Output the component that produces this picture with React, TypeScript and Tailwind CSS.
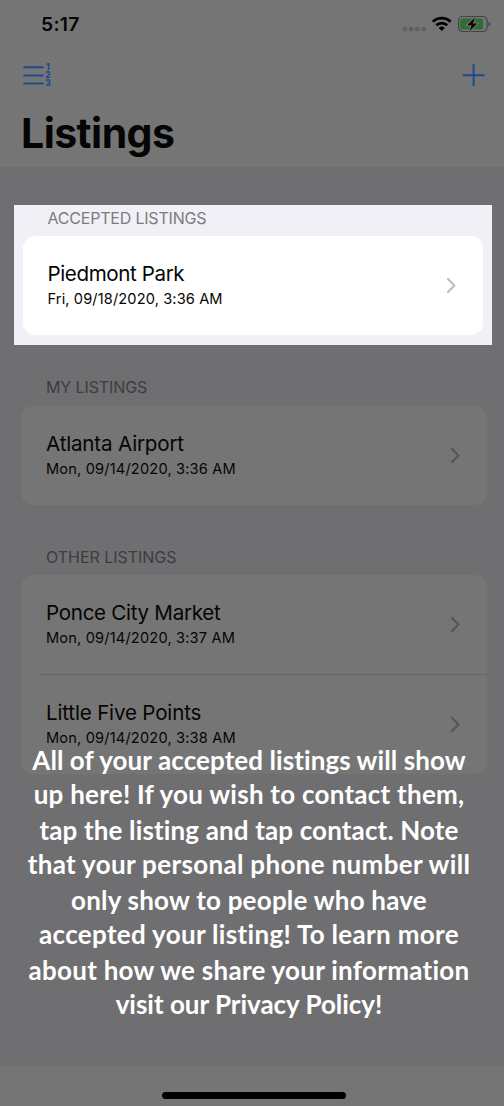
import React from "react";

function Chevron({ className }: { className: string }) {
  return (
    <svg width="11" height="17" viewBox="0 0 11 17" fill="none" className={className}>
      <path d="M2 2l6.4 6.5L2 15" stroke="currentColor" strokeWidth="2.2" strokeLinecap="round" strokeLinejoin="round" />
    </svg>
  );
}

type RowProps = {
  title: string;
  date: string;
  titleClass: string;
  dateClass: string;
  className: string;
  chevronClass: string;
};

function Row({ title, date, titleClass, dateClass, className, chevronClass }: RowProps) {
  return (
    <div className={`flex h-[99px] items-center justify-between ${className}`}>
      <div className="h-full whitespace-nowrap pt-6">
        <div className={`text-[20.6px] leading-[27px] ${titleClass}`}>{title}</div>
        <div className={`text-[14.6px] leading-[25px] ${dateClass}`}>{date}</div>
      </div>
      <Chevron className={chevronClass} />
    </div>
  );
}

const lines = [
  { text: "All of your accepted listings will show", className: "tracking-[0.08px]" },
  { text: "up here! If you wish to contact them,", className: "tracking-[0.25px]" },
  { text: "tap the listing and tap contact. Note", className: "pt-[2px] tracking-[0.14px]" },
  { text: "that your personal phone number will", className: "tracking-[0.33px]" },
  { text: "only show to people who have", className: "pt-[2px] tracking-[0.22px]" },
  { text: "accepted your listing! To learn more", className: "tracking-[0.32px]" },
  { text: "about how we share your information", className: "pt-[2px] tracking-[0.26px]" },
  { text: "visit our Privacy Policy!", className: "tracking-[-0.02px]" },
];

export default function App() {
  return (
    <div className="relative flex h-[1106px] w-[504px] flex-col overflow-hidden bg-[#757575] font-['Inter',sans-serif] text-[#050505]">
      <header className="h-[167px] shrink-0">
        <div className="flex h-[50px] items-start justify-between pl-[41px] pr-[13px]">
          <div className="pt-[10px] text-[19.3px] font-semibold leading-[28px] tracking-[0.3px]">5:17</div>
          <svg width="90" height="20" viewBox="401 14 90 20" className="mt-[14px]">
            <g fill="#606060">
              <rect x="402.7" y="26.7" width="4.5" height="4.5" rx="1.5" />
              <rect x="408.9" y="26.7" width="4.5" height="4.5" rx="1.5" />
              <rect x="415.1" y="26.7" width="4.5" height="4.5" rx="1.5" />
              <rect x="421.4" y="26.7" width="4.5" height="4.5" rx="1.5" />
            </g>
            <g fill="none" stroke="#000" strokeWidth="2.9">
              <path d="M432.9 21.8a12.6 12.6 0 0 1 17.7 0" />
              <path d="M436.3 25.3a7.9 7.9 0 0 1 10.9 0" />
            </g>
            <path d="M438.7 27.9a4.4 4.4 0 0 1 6.1 0l-3 3.1z" fill="#000" />
            <rect x="458.6" y="16.5" width="28.4" height="15" rx="4" fill="none" stroke="#444" strokeWidth="1.2" />
            <rect x="460.2" y="18.4" width="22.8" height="11.2" rx="2.2" fill="#2e6e33" />
            <path d="M488.6 21.8c2.3.8 2.3 3.8 0 4.6z" fill="#3f3f3f" />
            <path d="M475 17.6l-7.8 7.6h4.4l-2.1 5.8 7.8-7.6h-4.5z" fill="#000" stroke="#757575" strokeWidth="2" paintOrder="stroke" />
          </svg>
        </div>
        <div className="flex h-[50px] items-center justify-between pl-[22px] pr-[19px] text-[#1c4a8c]">
          <svg width="32" height="28" viewBox="22 61 32 28">
            <path d="M24.2 67.3h18.6M24.2 75.4h18.6M24.2 83.5h18.6" stroke="currentColor" strokeWidth="2" strokeLinecap="round" />
            <g fill="currentColor" fontFamily="Inter, sans-serif" fontSize="8.4" fontWeight="800" textAnchor="middle">
              <text x="47.9" y="70.2">1</text>
              <text x="47.9" y="78.3">2</text>
              <text x="47.9" y="86.4">3</text>
            </g>
          </svg>
          <svg width="23" height="24" viewBox="462 63 23 24">
            <path d="M463.6 75.2h20.2M473.6 65.1v20.2" stroke="currentColor" strokeWidth="2" strokeLinecap="round" />
          </svg>
        </div>
        <h1 className="pl-[21px] text-[41px] font-bold leading-[66px] tracking-[-0.55px]">Listings</h1>
      </header>

      <main className="h-[899px] shrink-0 bg-[#6f6f71]">
        <div className="h-[38px]" />
        <section className="ml-[14px] mr-3 h-[140px] bg-[#f1f0f6] px-[9px]">
          <h2 className="h-[31px] pl-[24.5px] text-[16px] leading-[26px] tracking-[-0.2px] text-[#7c7b80]">ACCEPTED LISTINGS</h2>
          <div className="rounded-[12px] bg-white pl-[24.5px] pr-[26px]">
            <Row
              title="Piedmont Park"
              date="Fri, 09/18/2020, 3:36 AM"
              titleClass="tracking-[-0.4px]"
              dateClass="tracking-[0.12px]"
              className=""
              chevronClass="text-[#bebec0]"
            />
          </div>
        </section>
        <section className="pl-[21px] pr-[17px]">
          <h2 className="h-[61px] pl-[25px] pt-7 text-[16px] leading-7 tracking-[-0.1px] text-[#3d3d3f]">MY LISTINGS</h2>
          <div className="rounded-[12px] bg-[#757575]">
            <Row
              title="Atlanta Airport"
              date="Mon, 09/14/2020, 3:36 AM"
              titleClass="tracking-[-0.18px]"
              dateClass="tracking-[0.17px]"
              className="pl-[25px] pr-[26px]"
              chevronClass="text-[#565657]"
            />
          </div>
        </section>
        <section className="pl-[21px] pr-[17px]">
          <h2 className="h-[70px] pl-[25px] pt-[38px] text-[16px] leading-7 tracking-[-0.03px] text-[#3d3d3f]">OTHER LISTINGS</h2>
          <div className="rounded-[12px] bg-[#757575]">
            <Row
              title="Ponce City Market"
              date="Mon, 09/14/2020, 3:37 AM"
              titleClass="tracking-[-0.3px]"
              dateClass="tracking-[0.17px]"
              className="pl-[25px] pr-[26px]"
              chevronClass="text-[#565657]"
            />
            <div className="ml-[19px] h-px bg-[#656566]" />
            <Row
              title="Little Five Points"
              date="Mon, 09/14/2020, 3:38 AM"
              titleClass="tracking-[-0.18px]"
              dateClass="tracking-[0.17px]"
              className="pl-[25px] pr-[26px]"
              chevronClass="text-[#565657]"
            />
          </div>
        </section>
      </main>

      <footer className="flex h-10 shrink-0 justify-center pl-1 pt-[26px]">
        <div className="h-[7px] w-[184px] rounded-full bg-black" />
      </footer>

      <p className="absolute left-0 top-[743px] w-[498px] whitespace-nowrap text-center font-['Lato',sans-serif] text-[26px] font-bold leading-[34px] text-white">
        {lines.map((line) => (
          <span key={line.text} className={`block ${line.className}`}>
            {line.text}
          </span>
        ))}
      </p>
    </div>
  );
}
